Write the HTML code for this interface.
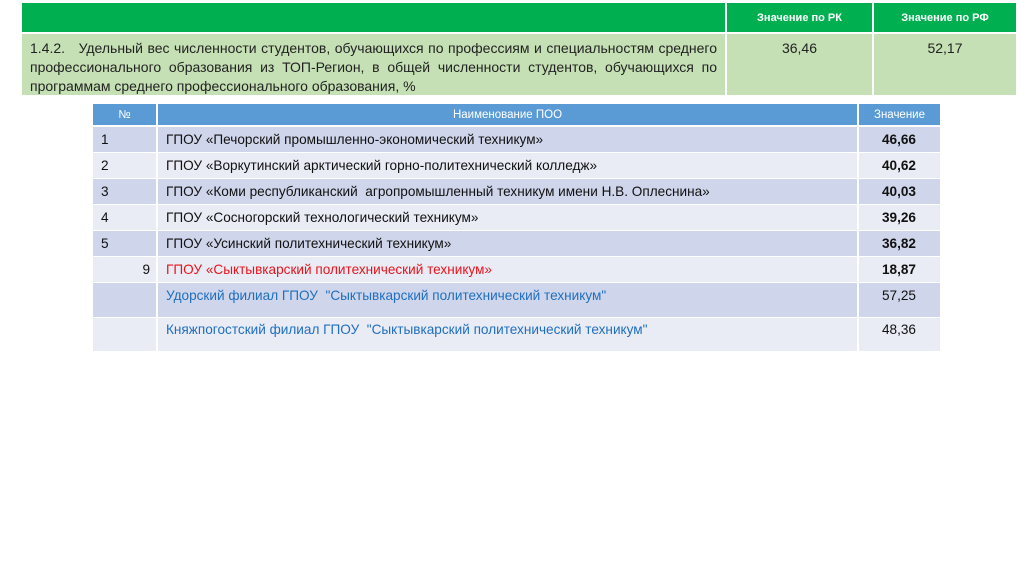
<!DOCTYPE html>
<html><head><meta charset="utf-8"><style>
body{margin:0;width:1024px;height:574px;background:#fff;font-family:"Liberation Sans","Noto Sans CJK SC",sans-serif;position:relative;overflow:hidden}
.a{position:absolute;box-sizing:border-box}
.g{background:#00b050;color:#fff;font-weight:bold;font-size:11px;text-align:center;padding-top:9px}
.lg{background:#c5e0b4;color:#222;font-size:13.5px}
.h{background:#5b9bd5;color:#fff;font-size:11.5px;text-align:center;padding-top:5px}
.d{background:#cfd5ea}.l{background:#e9ebf5}
.c{font-size:13.6px;color:#111;padding:5px 0 0 8px;white-space:nowrap}
.v{font-size:13.6px;color:#111;padding:5px 24px 0 0;text-align:right;font-weight:bold}
.b{color:#1f6fbf}
.j{text-align:justify;text-align-last:justify;white-space:nowrap;height:19px}
</style></head><body>
<div class="a g" style="left:22px;top:3px;width:703px;height:29px"></div>
<div class="a g" style="left:727px;top:3px;width:145px;height:29px">Значение по РК</div>
<div class="a g" style="left:874px;top:3px;width:142px;height:29px">Значение по РФ</div>
<div class="a lg" style="left:22px;top:34px;width:703px;height:61px;padding:5px 8px 0 8px;line-height:19px;font-size:14px">
<div class="j">1.4.2.&nbsp;&nbsp; Удельный вес численности студентов, обучающихся по профессиям и специальностям среднего</div>
<div class="j">профессионального образования из ТОП-Регион, в общей численности студентов, обучающихся по</div>
<div style="white-space:nowrap">программам среднего профессионального образования, %</div>
</div>
<div class="a lg" style="left:727px;top:34px;width:145px;height:61px;text-align:center;padding-top:6px;font-size:14px">36,46</div>
<div class="a lg" style="left:874px;top:34px;width:142px;height:61px;text-align:center;padding-top:6px;font-size:14px">52,17</div>

<div class="a h" style="left:93px;top:104px;width:63px;height:21px">№</div>
<div class="a h" style="left:158px;top:104px;width:699px;height:21px">Наименование ПОО</div>
<div class="a h" style="left:859px;top:104px;width:81px;height:21px">Значение</div>

<div class="a d c" style="left:93px;top:127px;width:63px;height:25px">1</div>
<div class="a d c" style="left:158px;top:127px;width:699px;height:25px">ГПОУ «Печорский промышленно-экономический техникум»</div>
<div class="a d v" style="left:859px;top:127px;width:81px;height:25px">46,66</div>

<div class="a l c" style="left:93px;top:153px;width:63px;height:25px">2</div>
<div class="a l c" style="left:158px;top:153px;width:699px;height:25px">ГПОУ «Воркутинский арктический горно-политехнический колледж»</div>
<div class="a l v" style="left:859px;top:153px;width:81px;height:25px">40,62</div>

<div class="a d c" style="left:93px;top:179px;width:63px;height:25px">3</div>
<div class="a d c" style="left:158px;top:179px;width:699px;height:25px">ГПОУ «Коми республиканский&nbsp; агропромышленный техникум имени Н.В. Оплеснина»</div>
<div class="a d v" style="left:859px;top:179px;width:81px;height:25px">40,03</div>

<div class="a l c" style="left:93px;top:205px;width:63px;height:25px">4</div>
<div class="a l c" style="left:158px;top:205px;width:699px;height:25px">ГПОУ «Сосногорский технологический техникум»</div>
<div class="a l v" style="left:859px;top:205px;width:81px;height:25px">39,26</div>

<div class="a d c" style="left:93px;top:231px;width:63px;height:25px">5</div>
<div class="a d c" style="left:158px;top:231px;width:699px;height:25px">ГПОУ «Усинский политехнический техникум»</div>
<div class="a d v" style="left:859px;top:231px;width:81px;height:25px">36,82</div>

<div class="a l c" style="left:93px;top:257px;width:63px;height:25px;text-align:right;padding-right:6px">9</div>
<div class="a l c" style="left:158px;top:257px;width:699px;height:25px;color:#e8141c">ГПОУ «Сыктывкарский политехнический техникум»</div>
<div class="a l v" style="left:859px;top:257px;width:81px;height:25px">18,87</div>

<div class="a d c" style="left:93px;top:283px;width:63px;height:34px"></div>
<div class="a d c b" style="left:158px;top:283px;width:699px;height:34px">Удорский филиал ГПОУ&nbsp; "Сыктывкарский политехнический техникум"</div>
<div class="a d v" style="left:859px;top:283px;width:81px;height:34px;font-weight:normal">57,25</div>

<div class="a l c" style="left:93px;top:318px;width:63px;height:33px"></div>
<div class="a l c b" style="left:158px;top:318px;width:699px;height:33px;padding-top:4px">Княжпогостский филиал ГПОУ&nbsp; "Сыктывкарский политехнический техникум"</div>
<div class="a l v" style="left:859px;top:318px;width:81px;height:33px;font-weight:normal;padding-top:4px">48,36</div>
</body></html>
